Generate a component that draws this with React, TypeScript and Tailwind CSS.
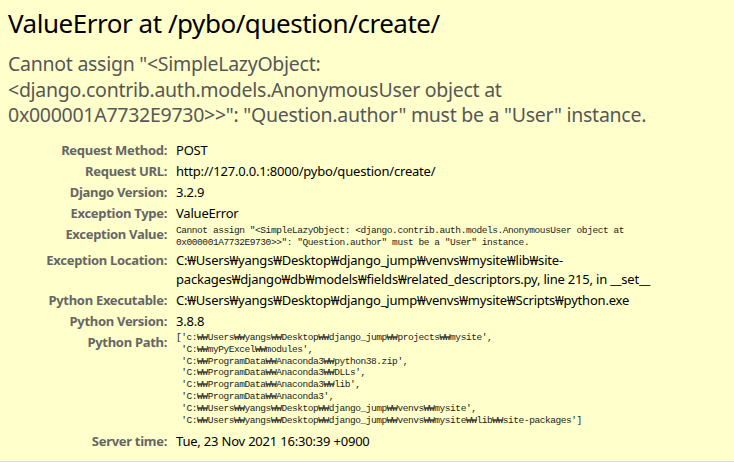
import React from "react";

const sans = { fontFamily: '"Noto Sans", "Noto Sans CJK KR", sans-serif' };

const pythonPath = [
  "['c:₩₩Users₩₩yangs₩₩Desktop₩₩django_jump₩₩projects₩₩mysite',",
  " 'C:₩₩myPyExcel₩₩modules',",
  " 'C:₩₩ProgramData₩₩Anaconda3₩₩python38.zip',",
  " 'C:₩₩ProgramData₩₩Anaconda3₩₩DLLs',",
  " 'C:₩₩ProgramData₩₩Anaconda3₩₩lib',",
  " 'C:₩₩ProgramData₩₩Anaconda3',",
  " 'C:₩₩Users₩₩yangs₩₩Desktop₩₩django_jump₩₩venvs₩₩mysite',",
  " 'C:₩₩Users₩₩yangs₩₩Desktop₩₩django_jump₩₩venvs₩₩mysite₩₩lib₩₩site-packages']",
];

function Label({ children }: { children: React.ReactNode }) {
  return (
    <div className="text-right pr-[3px] py-[1px] text-[13px] leading-[19px] tracking-[-0.3px] font-bold text-[#666] whitespace-nowrap">
      {children}
    </div>
  );
}

function Value({ children }: { children: React.ReactNode }) {
  return (
    <div className="pl-[6px] py-[1px] text-[13px] leading-[19px] tracking-[-0.2px] text-black whitespace-nowrap">
      {children}
    </div>
  );
}

function Mono({ children, className = "" }: { children: React.ReactNode; className?: string }) {
  return (
    <div
      className={
        "pl-[6px] text-[9.5px] tracking-[-0.43px] text-[#222] whitespace-pre font-['Liberation_Mono','DejaVu_Sans_Mono',monospace] " +
        className
      }
    >
      {children}
    </div>
  );
}

export default function App() {
  return (
    <div
      className="w-[734px] h-[462px] overflow-hidden bg-[#ffc] border-b border-[#ddd] box-border pl-2 pt-[7px]"
      style={sans}
    >
      <h1 className="text-[26px] leading-[32px] tracking-[-0.47px] font-normal text-black whitespace-nowrap">
        ValueError at /pybo/question/create/
      </h1>
      <div className="mt-[12px] text-[19.5px] leading-[25.5px] tracking-[-0.27px] text-[#575757] whitespace-nowrap">
        <div>Cannot assign "&lt;SimpleLazyObject:</div>
        <div>&lt;django.contrib.auth.models.AnonymousUser object at</div>
        <div>0x000001A7732E9730&gt;&gt;": "Question.author" must be a "User" instance.</div>
      </div>
      <div className="mt-[12px] -ml-2 grid grid-cols-[170px_1fr]">
        <Label>Request Method:</Label>
        <Value>POST</Value>

        <Label>Request URL:</Label>
        <Value>http://127.0.0.1:8000/pybo/question/create/</Value>

        <Label>Django Version:</Label>
        <Value>3.2.9</Value>

        <Label>Exception Type:</Label>
        <Value>ValueError</Value>

        <Label>Exception Value:</Label>
        <Mono className="leading-[11.5px] pt-[1.5px] pb-[1.5px]">
          {'Cannot assign "<SimpleLazyObject: <django.contrib.auth.models.AnonymousUser object at\n0x000001A7732E9730>>": "Question.author" must be a "User" instance.'}
        </Mono>

        <Label>Exception Location:</Label>
        <Value>
          <div>C:₩Users₩yangs₩Desktop₩django_jump₩venvs₩mysite₩lib₩site-</div>
          <div>packages₩django₩db₩models₩fields₩related_descriptors.py, line 215, in __set__</div>
        </Value>

        <Label>Python Executable:</Label>
        <Value>C:₩Users₩yangs₩Desktop₩django_jump₩venvs₩mysite₩Scripts₩python.exe</Value>

        <Label>Python Version:</Label>
        <Value>3.8.8</Value>

        <Label>Python Path:</Label>
        <Mono className="leading-[11.8px] pt-[0.5px] pb-[5px]">{pythonPath.join("\n")}</Mono>

        <Label>Server time:</Label>
        <Value>Tue, 23 Nov 2021 16:30:39 +0900</Value>
      </div>
    </div>
  );
}
